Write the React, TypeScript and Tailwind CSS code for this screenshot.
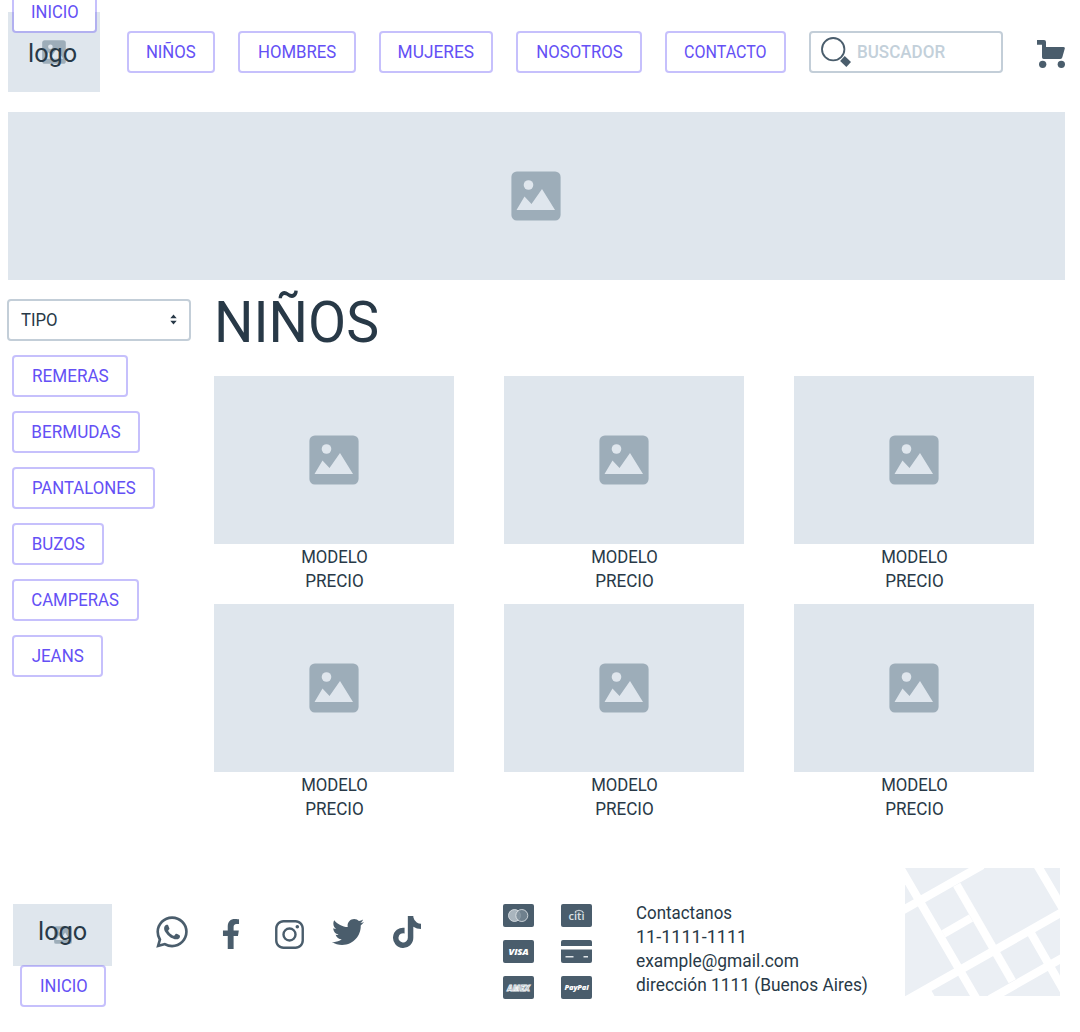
import React from "react";
import { FaFacebookF, FaTiktok, FaTwitter } from "react-icons/fa";
import { IoLogoInstagram, IoLogoWhatsapp } from "react-icons/io5";

function ImageGlyph({ className }: { className: string }) {
  return (
    <svg viewBox="0 0 50 50" className={className}>
      <rect x=".4" y=".4" width="49.200" height="49.200" rx="5.500" fill="#9dadb9" />
      <circle cx="17.500" cy="14" r="4.800" fill="#dfe6ed" />
      <path d="M5.500 39 13.500 25.500l7 7.500L31 18 44 39z" fill="#dfe6ed" />
    </svg>
  );
}

function Placeholder({ className }: { className: string }) {
  return (
    <div className={`flex items-center justify-center bg-[#dfe6ed] ${className}`}>
      <ImageGlyph className="size-[50px]" />
    </div>
  );
}

function OutlineButton({ label, className, text }: { label: string; className: string; text: string }) {
  return (
    <button
      className={`flex h-[42px] shrink-0 items-center justify-center rounded border-2 border-[#6554f8]/37 bg-white bg-clip-padding text-lg leading-6 whitespace-nowrap text-[#6450f5] ${className}`}
    >
      <span className={`block ${text}`}>{label}</span>
    </button>
  );
}

const nav = [
  { label: "NIÑOS", className: "w-[88px]", text: "scale-x-[.93]" },
  { label: "HOMBRES", className: "w-[118px]", text: "scale-x-[.93]" },
  { label: "MUJERES", className: "w-[114px]", text: "scale-x-[.96]" },
  { label: "NOSOTROS", className: "w-[126px]", text: "scale-x-[.93]" },
  { label: "CONTACTO", className: "w-[121px]", text: "scale-x-[.89]" },
];

const categories = [
  { label: "REMERAS", className: "w-[116px]", text: "scale-x-[.95]" },
  { label: "BERMUDAS", className: "w-[128px]", text: "scale-x-[.95]" },
  { label: "PANTALONES", className: "w-[143px]", text: "scale-x-[.93]" },
  { label: "BUZOS", className: "w-[92px]", text: "scale-x-[.94]" },
  { label: "CAMPERAS", className: "w-[127px]", text: "scale-x-[.93]" },
  { label: "JEANS", className: "w-[91px]", text: "scale-x-[.94]" },
];

function Header() {
  return (
    <header className="flex h-28 pl-2">
      <div className="relative mt-3 flex h-20 w-[92px] shrink-0 items-center justify-center bg-[#dfe6ed]">
        <ImageGlyph className="size-6" />
        <span className="absolute top-[25px] left-5 origin-left scale-x-[.97] text-[26px] leading-8">logo</span>
        <OutlineButton label="INICIO" className="absolute -top-[21px] left-1 w-[85px]" text="scale-x-[.92]" />
      </div>
      <nav className="mt-[31px] ml-[27px] flex gap-[23px]">
        {nav.map((n) => (
          <OutlineButton key={n.label} {...n} />
        ))}
        <div className="flex h-[42px] w-[194px] items-center rounded border-2 border-[#c3ced8] pl-[10px] text-lg text-[#c3d0da]">
          <svg viewBox="302 80 91 91" className="size-[30px]">
            <circle cx="339" cy="117" r="34" fill="none" stroke="#4a5d6c" strokeWidth="5.500" />
            <path d="m374 138 19 18-14 15-19-18z" fill="#4a5d6c" />
          </svg>
          <span className="ml-[6px] origin-left scale-x-[.945] font-medium">BUSCADOR</span>
        </div>
      </nav>
      <svg viewBox="951 90 84 84" className="mt-10 ml-[34px] size-7 shrink-0" fill="#4a5d6c">
        <path d="M951 90h21q6 0 6 6v15h52q6 0 4 6l-7 25q-1 5-6 5h-50q-5 0-5-5v-38h-15z" />
        <circle cx="968" cy="163" r="11" />
        <circle cx="1024" cy="163" r="11" />
      </svg>
    </header>
  );
}

function Card({ children }: { children?: React.ReactNode }) {
  return (
    <div className="relative flex h-[23px] w-[31px] items-center justify-center overflow-hidden rounded-[2px] bg-[#4a5d6c] font-['Open_Sans'] leading-none text-white">
      {children}
    </div>
  );
}

function Payments() {
  return (
    <div className="grid grid-cols-[31px_31px] gap-x-[27px] gap-y-[13px]">
      <Card>
        <svg viewBox="0 0 31 23" className="size-full">
          <circle cx="11.500" cy="11.500" r="6" fill="#a9b5be" stroke="#e6eaed" strokeWidth=".8" />
          <circle cx="18.800" cy="11.500" r="6" fill="#788996" fillOpacity=".8" stroke="#e6eaed" strokeWidth=".8" />
        </svg>
      </Card>
      <Card>
        <svg viewBox="0 0 31 23" className="absolute inset-0">
          <path d="M14 7.800q4-3 8 0" fill="none" stroke="#c6ced4" strokeWidth="1.200" />
        </svg>
        <span className="text-[11px] font-semibold text-[#dce1e5]">citi</span>
      </Card>
      <Card>
        <span className="text-[9.5px] font-extrabold tracking-[-0.2px] italic">VISA</span>
      </Card>
      <Card>
        <svg viewBox="0 0 31 23" className="size-full">
          <path d="M0 6h31v3.500H0z" fill="#fff" />
          <path d="M4.500 16h8v1.600h-8zM22.500 16h4.500v1.600h-4.500z" fill="#e1e6e9" />
        </svg>
      </Card>
      <Card>
        <span className="text-[8px] font-extrabold text-[#8d9ba6] italic [-webkit-text-stroke:0.8px_#f2f4f6]">AMEX</span>
      </Card>
      <Card>
        <span className="text-[7.5px] font-extrabold tracking-[-0.2px] italic">PayPal</span>
      </Card>
    </div>
  );
}

function StreetMap() {
  return (
    <svg viewBox="0 0 155 128" className="h-32 w-[155px] shrink-0 bg-[#ebeff4]">
      <g stroke="#fff" strokeWidth="8.300" fill="none">
        <path d="M-5 43.800 77.300-2.800" />
        <path d="m-4.700 0 78 134" />
        <path d="m51.700 16.700 55.600 96.600" />
        <path d="m38.300 66 27.700-16" />
        <path d="m0 133.100 160-90.600" />
        <path d="m85 131.100 75-42.600" />
        <path d="m126 65.300 34 59.400" />
        <path d="m131-5 30 51" />
      </g>
      <path d="M10 128 25.500 121l4 7z" fill="#fff" />
    </svg>
  );
}

function Footer() {
  return (
    <footer className="mt-12 flex pl-[13px] text-[#4a5d6c]">
      <div className="mt-9 flex w-[99px] shrink-0 flex-col">
        <div className="relative flex h-[62px] items-center justify-center bg-[#dfe6ed]">
          <ImageGlyph className="size-[18px]" />
          <span className="absolute top-[11px] left-[25px] origin-left scale-x-[.97] text-[26px] leading-8 text-[#283947]">
            logo
          </span>
        </div>
        <OutlineButton label="INICIO" className="relative -mt-px ml-[7px] w-[86px] pl-px" text="scale-x-[.92]" />
      </div>
      <div className="ml-[42px] flex w-[268px] shrink-0 items-start pt-[46px]">
        <IoLogoWhatsapp className="size-9" />
        <FaFacebookF className="mt-[5px] ml-[26px] size-[30px]" />
        <IoLogoInstagram className="mt-1 ml-[27px] size-[33px]" />
        <FaTwitter className="mt-0.5 ml-[26px] size-8" />
        <FaTiktok className="mt-0.5 ml-[29px] h-8 w-7" />
      </div>
      <div className="ml-[81px] pt-9">
        <Payments />
      </div>
      <div className="mt-[33px] ml-[44px] w-[269px] text-lg leading-6 whitespace-nowrap text-[#283947]">
        <p className="origin-left scale-x-[.94]">Contactanos</p>
        <p className="origin-left">11-1111-1111</p>
        <p className="origin-left scale-x-[.965]">example@gmail.com</p>
        <p className="origin-left scale-x-[.963]">dirección 1111 (Buenos Aires)</p>
      </div>
      <StreetMap />
    </footer>
  );
}

export default function App() {
  return (
    <div className="h-[1032px] w-[1080px] overflow-hidden bg-white font-['Roboto',sans-serif] text-[#283947]">
      <Header />
      <Placeholder className="ml-2 h-[168px] w-[1057px] pr-px" />
      <div className="flex h-[540px]">
        <aside className="mt-[19px] ml-[7px] w-[207px]">
          <div className="flex h-[42px] w-[184px] items-center justify-between rounded border-2 border-[#c3ced8] pr-3 pl-3 text-lg">
            <span className="origin-left scale-x-[.93]">TIPO</span>
            <svg viewBox="0 0 7 11" className="-mt-px h-[11px] w-[7px]" fill="#283947">
              <path d="M.3 4.200 3.500.5l3.200 3.700zM.3 6.800h6.400l-3.200 3.700z" />
            </svg>
          </div>
          <div className="mt-[14px] ml-[5px] flex flex-col items-start gap-[14px]">
            {categories.map((c) => (
              <OutlineButton key={c.label} {...c} />
            ))}
          </div>
        </aside>
        <main>
          <h1 className="h-24 text-[58px] leading-[84px]">
            <span className="block w-fit origin-left scale-x-[.955]">NIÑOS</span>
          </h1>
          <div className="grid grid-cols-[240px_240px_240px] gap-x-[50px] gap-y-3">
            {Array.from({ length: 6 }, (_, i) => (
              <article key={i} className="h-[216px] text-center text-lg leading-6">
                <Placeholder className="h-[168px]" />
                <p className="mt-px ml-px scale-x-[.93]">MODELO</p>
                <p className="ml-px scale-x-[.95]">PRECIO</p>
              </article>
            ))}
          </div>
        </main>
      </div>
      <Footer />
    </div>
  );
}
